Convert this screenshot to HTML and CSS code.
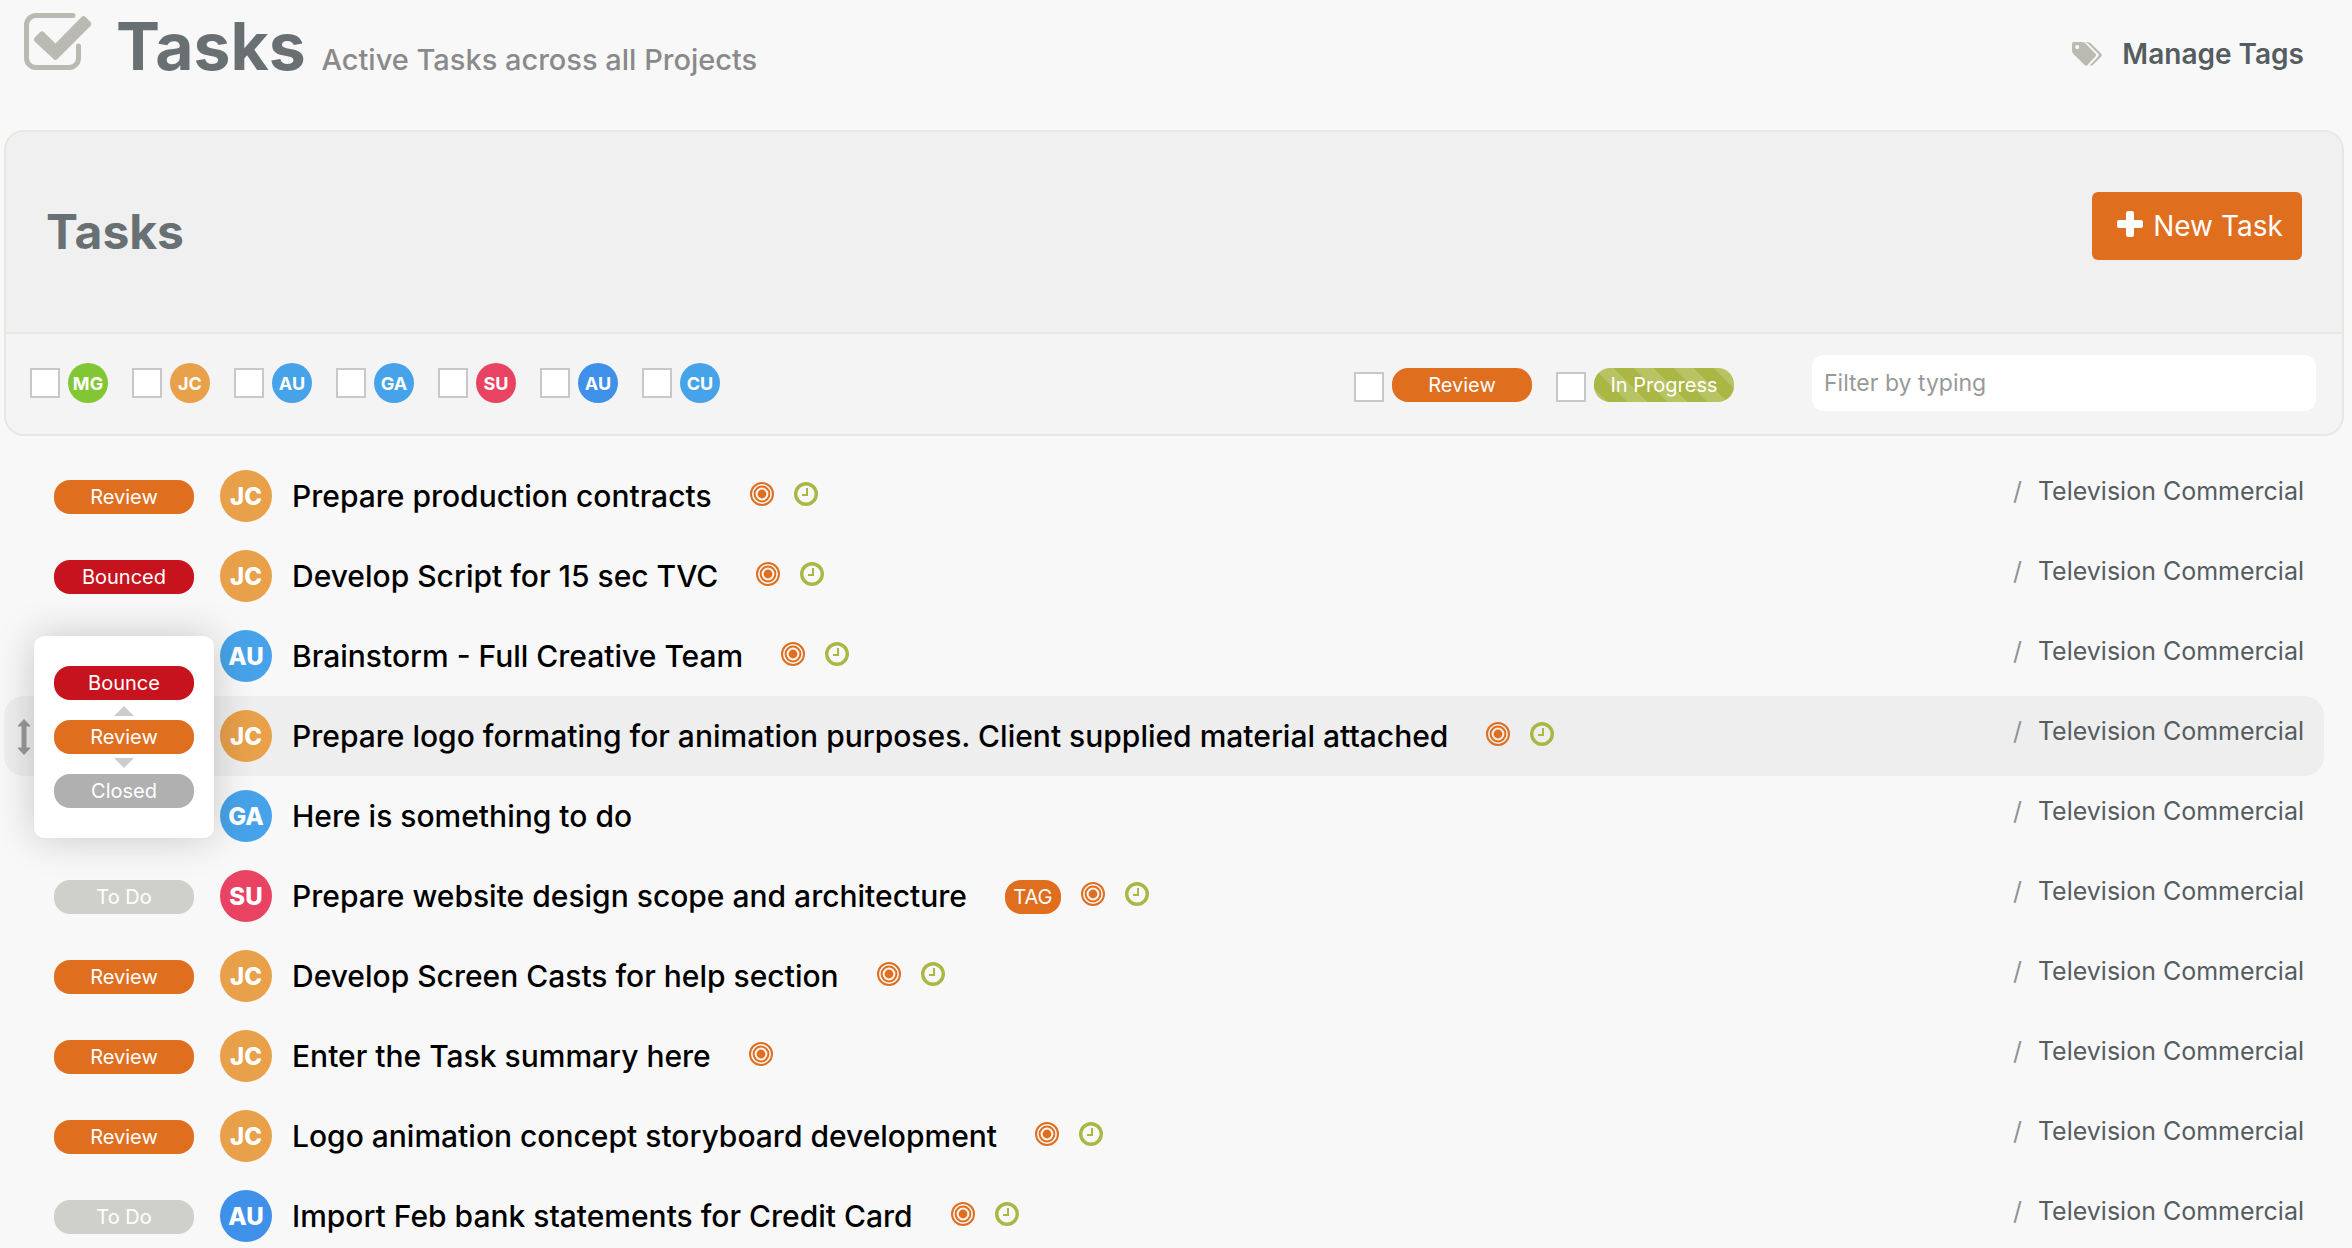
FILE: index.html
```html
<!DOCTYPE html>
<html lang="en">
<head>
<meta charset="utf-8">
<title>Tasks</title>
<link rel="stylesheet" href="styles.css">
</head>
<body>
<svg class="sprite" aria-hidden="true">
  <symbol id="target" viewBox="0 0 24 24"><g fill="none" stroke="currentColor" stroke-width="2"><circle cx="12" cy="12" r="11"/><circle cx="12" cy="12" r="7.4"/></g><circle cx="12" cy="12" r="4.4" fill="currentColor"/></symbol>
  <symbol id="clock" viewBox="0 0 24 24"><circle cx="12" cy="12" r="10.3" fill="none" stroke="currentColor" stroke-width="3.4"/><path d="M13 6v7H8" fill="none" stroke="currentColor" stroke-width="2"/></symbol>
</svg>

<header class="page-head">
  <svg class="page-icon" viewBox="0 0 68 58" aria-hidden="true">
    <path d="M49 2.5H12A9.500 9.500 0 0 0 2.500 12V45A9.500 9.500 0 0 0 12 54.500H45A9.500 9.500 0 0 0 54.500 45V33" fill="none" stroke="currentColor" stroke-width="5" stroke-linecap="round"/>
    <path d="M10.700 24.500L16 19.200Q18 17.500 20 19.200L31.500 30.500L57.500 4Q59.500 2 61.500 4L66.500 9Q68.300 11 66.500 13L33.500 46Q31.500 48 29.500 46L10.700 28.500Q9 26.500 10.700 24.500Z" fill="currentColor"/>
  </svg>
  <h1 class="page-title">Tasks <small class="page-sub">Active Tasks across all Projects</small></h1>
  <a class="manage" href="#tags">
    <svg class="manage-icon" viewBox="0 0 30 24" aria-hidden="true">
      <path fill="currentColor" fill-rule="evenodd" d="M0 2Q0 0 2 0H10Q12 0 13.500 1.500L23.300 11.500Q24.800 13 23.300 14.500L15.500 23Q14 24.500 12.500 23L1.500 12Q0 10.500 0 8.500ZM5.200 3A2.100 2.100 0 1 0 5.200 7.200A2.100 2.100 0 1 0 5.200 3Z"/>
      <path fill="currentColor" d="M12.500 0H15.500Q17.500 0 19 1.500L29 11.500Q30.500 13 29 14.700L21 22.800Q19.800 24.300 18 23.200L26 14.800Q27.500 13 26 11.500L16 1.500Q14.500 0 12.500 0Z"/>
    </svg>
    Manage Tags
  </a>
</header>

<main>
  <section class="panel">
    <div class="panel-head">
      <h2 class="panel-title">Tasks</h2>
      <button class="new-task" type="button">
        <svg class="plus" viewBox="0 0 26 26" aria-hidden="true"><path fill="currentColor" d="M11 0h4q2 0 2 2v7h7q2 0 2 2v4q0 2-2 2h-7v7q0 2-2 2h-4q-2 0-2-2v-7H2q-2 0-2-2v-4q0-2 2-2h7V2q0-2 2-2z"/></svg>
        New Task
      </button>
    </div>
    <form class="filters">
      <div class="people">
        <label class="check"><input type="checkbox"><span class="avatar small green">MG</span></label>
        <label class="check"><input type="checkbox"><span class="avatar small amber">JC</span></label>
        <label class="check"><input type="checkbox"><span class="avatar small sky">AU</span></label>
        <label class="check"><input type="checkbox"><span class="avatar small sky">GA</span></label>
        <label class="check"><input type="checkbox"><span class="avatar small pink">SU</span></label>
        <label class="check"><input type="checkbox"><span class="avatar small blue">AU</span></label>
        <label class="check"><input type="checkbox"><span class="avatar small sky">CU</span></label>
      </div>
      <div class="states">
        <label class="check"><input type="checkbox"><span class="pill review">Review</span></label>
        <label class="check"><input type="checkbox"><span class="pill progress">In Progress</span></label>
      </div>
      <input class="search" type="text" placeholder="Filter by typing" aria-label="Filter by typing">
    </form>
  </section>

  <ul class="tasks">
    <li class="task">
      <div class="status"><button type="button" class="pill review">Review</button></div>
      <span class="avatar amber">JC</span>
      <span class="name">Prepare production contracts</span>
      <span class="marks"><svg class="mark target"><use href="#target"/></svg><svg class="mark clock"><use href="#clock"/></svg></span>
      <span class="project"><span class="slash">/</span><a href="#project">Television Commercial</a></span>
    </li>
    <li class="task">
      <div class="status"><button type="button" class="pill bounced">Bounced</button></div>
      <span class="avatar amber">JC</span>
      <span class="name">Develop Script for 15 sec TVC</span>
      <span class="marks"><svg class="mark target"><use href="#target"/></svg><svg class="mark clock"><use href="#clock"/></svg></span>
      <span class="project"><span class="slash">/</span><a href="#project">Television Commercial</a></span>
    </li>
    <li class="task">
      <div class="status"></div>
      <span class="avatar sky">AU</span>
      <span class="name">Brainstorm - Full Creative Team</span>
      <span class="marks"><svg class="mark target"><use href="#target"/></svg><svg class="mark clock"><use href="#clock"/></svg></span>
      <span class="project"><span class="slash">/</span><a href="#project">Television Commercial</a></span>
    </li>
    <li class="task active">
      <svg class="drag" viewBox="0 0 14 36" aria-hidden="true"><path fill="currentColor" stroke="currentColor" stroke-width="1" stroke-linejoin="round" d="M7 .5l6 6.500H9v22h4l-6 6.500L1 29h4V7H1z"/></svg>
      <div class="status">
        <div class="menu">
          <button type="button" class="pill bounced">Bounce</button>
          <span class="arrow up"></span>
          <button type="button" class="pill review">Review</button>
          <span class="arrow down"></span>
          <button type="button" class="pill closed">Closed</button>
        </div>
      </div>
      <span class="avatar amber">JC</span>
      <span class="name">Prepare logo formating for animation purposes. Client supplied material attached</span>
      <span class="marks"><svg class="mark target"><use href="#target"/></svg><svg class="mark clock"><use href="#clock"/></svg></span>
      <span class="project"><span class="slash">/</span><a href="#project">Television Commercial</a></span>
    </li>
    <li class="task">
      <div class="status"></div>
      <span class="avatar sky">GA</span>
      <span class="name">Here is something to do</span>
      <span class="project"><span class="slash">/</span><a href="#project">Television Commercial</a></span>
    </li>
    <li class="task">
      <div class="status"><button type="button" class="pill todo">To Do</button></div>
      <span class="avatar pink">SU</span>
      <span class="name">Prepare website design scope and architecture</span>
      <span class="marks"><span class="tag">TAG</span><svg class="mark target"><use href="#target"/></svg><svg class="mark clock"><use href="#clock"/></svg></span>
      <span class="project"><span class="slash">/</span><a href="#project">Television Commercial</a></span>
    </li>
    <li class="task">
      <div class="status"><button type="button" class="pill review">Review</button></div>
      <span class="avatar amber">JC</span>
      <span class="name">Develop Screen Casts for help section</span>
      <span class="marks"><svg class="mark target"><use href="#target"/></svg><svg class="mark clock"><use href="#clock"/></svg></span>
      <span class="project"><span class="slash">/</span><a href="#project">Television Commercial</a></span>
    </li>
    <li class="task">
      <div class="status"><button type="button" class="pill review">Review</button></div>
      <span class="avatar amber">JC</span>
      <span class="name">Enter the Task summary here</span>
      <span class="marks"><svg class="mark target"><use href="#target"/></svg></span>
      <span class="project"><span class="slash">/</span><a href="#project">Television Commercial</a></span>
    </li>
    <li class="task">
      <div class="status"><button type="button" class="pill review">Review</button></div>
      <span class="avatar amber">JC</span>
      <span class="name">Logo animation concept storyboard development</span>
      <span class="marks"><svg class="mark target"><use href="#target"/></svg><svg class="mark clock"><use href="#clock"/></svg></span>
      <span class="project"><span class="slash">/</span><a href="#project">Television Commercial</a></span>
    </li>
    <li class="task">
      <div class="status"><button type="button" class="pill todo">To Do</button></div>
      <span class="avatar blue">AU</span>
      <span class="name">Import Feb bank statements for Credit Card</span>
      <span class="marks"><svg class="mark target"><use href="#target"/></svg><svg class="mark clock"><use href="#clock"/></svg></span>
      <span class="project"><span class="slash">/</span><a href="#project">Television Commercial</a></span>
    </li>
  </ul>
</main>
</body>
</html>
```
FILE: styles.css
```css
* { box-sizing: border-box; }

body {
  margin: 0;
  height: 100vh;
  overflow: hidden;
  background: #f8f8f8;
  color: #000;
  font-family: Inter, "Open Sans", sans-serif;
  font-size: 28px;
}

button, input { font: inherit; }
button { border: 0; padding: 0; cursor: pointer; }
a { color: inherit; text-decoration: none; }
.sprite { display: none; }

/* Page header */
.page-head {
  display: flex;
  align-items: flex-start;
  height: 130px;
  padding: 0 48px 0 24px;
}
.page-icon { width: 68px; height: 58px; margin: 13px 24px 0 0; color: #babab2; }
.page-title {
  margin: 0;
  font-size: 66px;
  line-height: 92px;
  font-weight: 700;
  color: #697073;
}
.page-sub { font-size: 29px; font-weight: 500; color: #8a8a8a; }
.manage {
  display: flex;
  align-items: center;
  gap: 20px;
  margin: 34px 0 0 auto;
  line-height: 40px;
  font-weight: 600;
  color: #555d61;
}
.manage-icon { width: 30px; height: 24px; color: #babab2; }

/* Panel */
.panel {
  margin: 0 8px 20px 4px;
  border: 2px solid #e7e8e1;
  border-radius: 20px;
  background: #f4f4f4;
  overflow: hidden;
}
.panel-head {
  display: flex;
  align-items: flex-start;
  justify-content: space-between;
  height: 202px;
  padding: 60px 40px 0;
  border-bottom: 2px solid #e7e8e1;
  background: #f0f0f0;
}
.panel-title {
  margin: 8px 0 0;
  font-size: 48px;
  line-height: 64px;
  font-weight: 700;
  color: #697073;
}
.new-task {
  display: flex;
  align-items: center;
  justify-content: center;
  gap: 10px;
  width: 210px;
  height: 68px;
  padding: 0 0 0 6px;
  border-radius: 6px;
  background: #e06e1f;
  color: #fff;
}
.plus { width: 26px; height: 26px; margin-bottom: 4px; }

.filters {
  display: flex;
  align-items: center;
  height: 100px;
  padding: 0 26px 2px 24px;
}
.people { display: flex; gap: 24px; }
.states { display: flex; gap: 24px; margin: 4px 78px 0 auto; }
.check { display: flex; align-items: center; gap: 8px; }
.check input {
  appearance: none;
  width: 30px;
  height: 30px;
  margin: 0;
  border: 2px solid #c8c8c8;
  background: #fff;
}
.states input { margin-top: 4px; }
.search {
  width: 504px;
  height: 56px;
  padding: 0 12px;
  border: 0;
  border-radius: 12px;
  background: #fff;
  font-size: 23px;
}
.search::placeholder { color: #999; opacity: 1; }

/* Shared badges */
.avatar {
  display: flex;
  align-items: center;
  justify-content: center;
  flex: none;
  width: 52px;
  height: 52px;
  border-radius: 50%;
  font-size: 24px;
  font-weight: 800;
  color: #fff;
}
.avatar.small { width: 40px; height: 40px; font-size: 18px; font-weight: 700; }
.green { background: #83c633; }
.amber { background: #e8a04a; }
.sky { background: #47a3e9; }
.blue { background: #3f90e9; }
.pink { background: #e84362; }

.pill {
  display: block;
  width: 140px;
  height: 34px;
  border-radius: 16px;
  font-size: 20px;
  line-height: 34px;
  text-align: center;
  color: #fff;
}
.review { background: #e06e1f; }
.bounced { background: #c6131e; }
.closed { background: #b0b0b0; }
.todo { background: #d0d0ca; }
.progress {
  background: linear-gradient(45deg, #b8c364 25%, #aab744 25% 50%, #b8c364 50% 75%, #aab744 75%) 0 0 / 40px 40px;
}

/* Task list */
.tasks { margin: 0; padding: 0 28px 0 4px; list-style: none; }
.task {
  position: relative;
  display: flex;
  align-items: center;
  height: 80px;
  padding: 0 20px 0 50px;
  border-radius: 20px;
}
.active { background: #eee; }
.drag { position: absolute; left: 13px; top: 23px; width: 14px; height: 36px; color: #999; }
.status { width: 140px; margin: 2px 26px 0 0; }
.menu {
  position: absolute;
  left: 30px;
  top: -60px;
  z-index: 1;
  display: flex;
  flex-direction: column;
  align-items: center;
  width: 180px;
  padding: 30px 20px;
  border-radius: 10px;
  background: #fff;
  box-shadow: 0 0 40px rgba(0, 0, 0, 0.2);
}
.arrow {
  width: 20px;
  height: 10px;
  background: #ccc;
}
.arrow.up { margin: 6px 0 4px; clip-path: polygon(50% 0, 100% 100%, 0 100%); }
.arrow.down { margin: 4px 0 6px; clip-path: polygon(0 0, 100% 0, 50% 100%); }
.name { margin-left: 20px; font-size: 30px; font-weight: 500; white-space: nowrap; }
.marks { display: flex; align-items: center; gap: 20px; margin-left: 38px; }
.mark { width: 24px; height: 24px; margin-bottom: 4px; }
.target { color: #e06e1f; }
.clock { color: #aab744; }
.tag {
  width: 56px;
  height: 34px;
  margin-top: 2px;
  border-radius: 16px;
  background: #e06e1f;
  color: #fff;
  font-size: 20px;
  line-height: 34px;
  text-align: center;
}
.project {
  display: flex;
  gap: 16px;
  margin: 0 0 10px auto;
  font-size: 25px;
  color: #555d61;
}
.slash { color: #8e9498; }
```
